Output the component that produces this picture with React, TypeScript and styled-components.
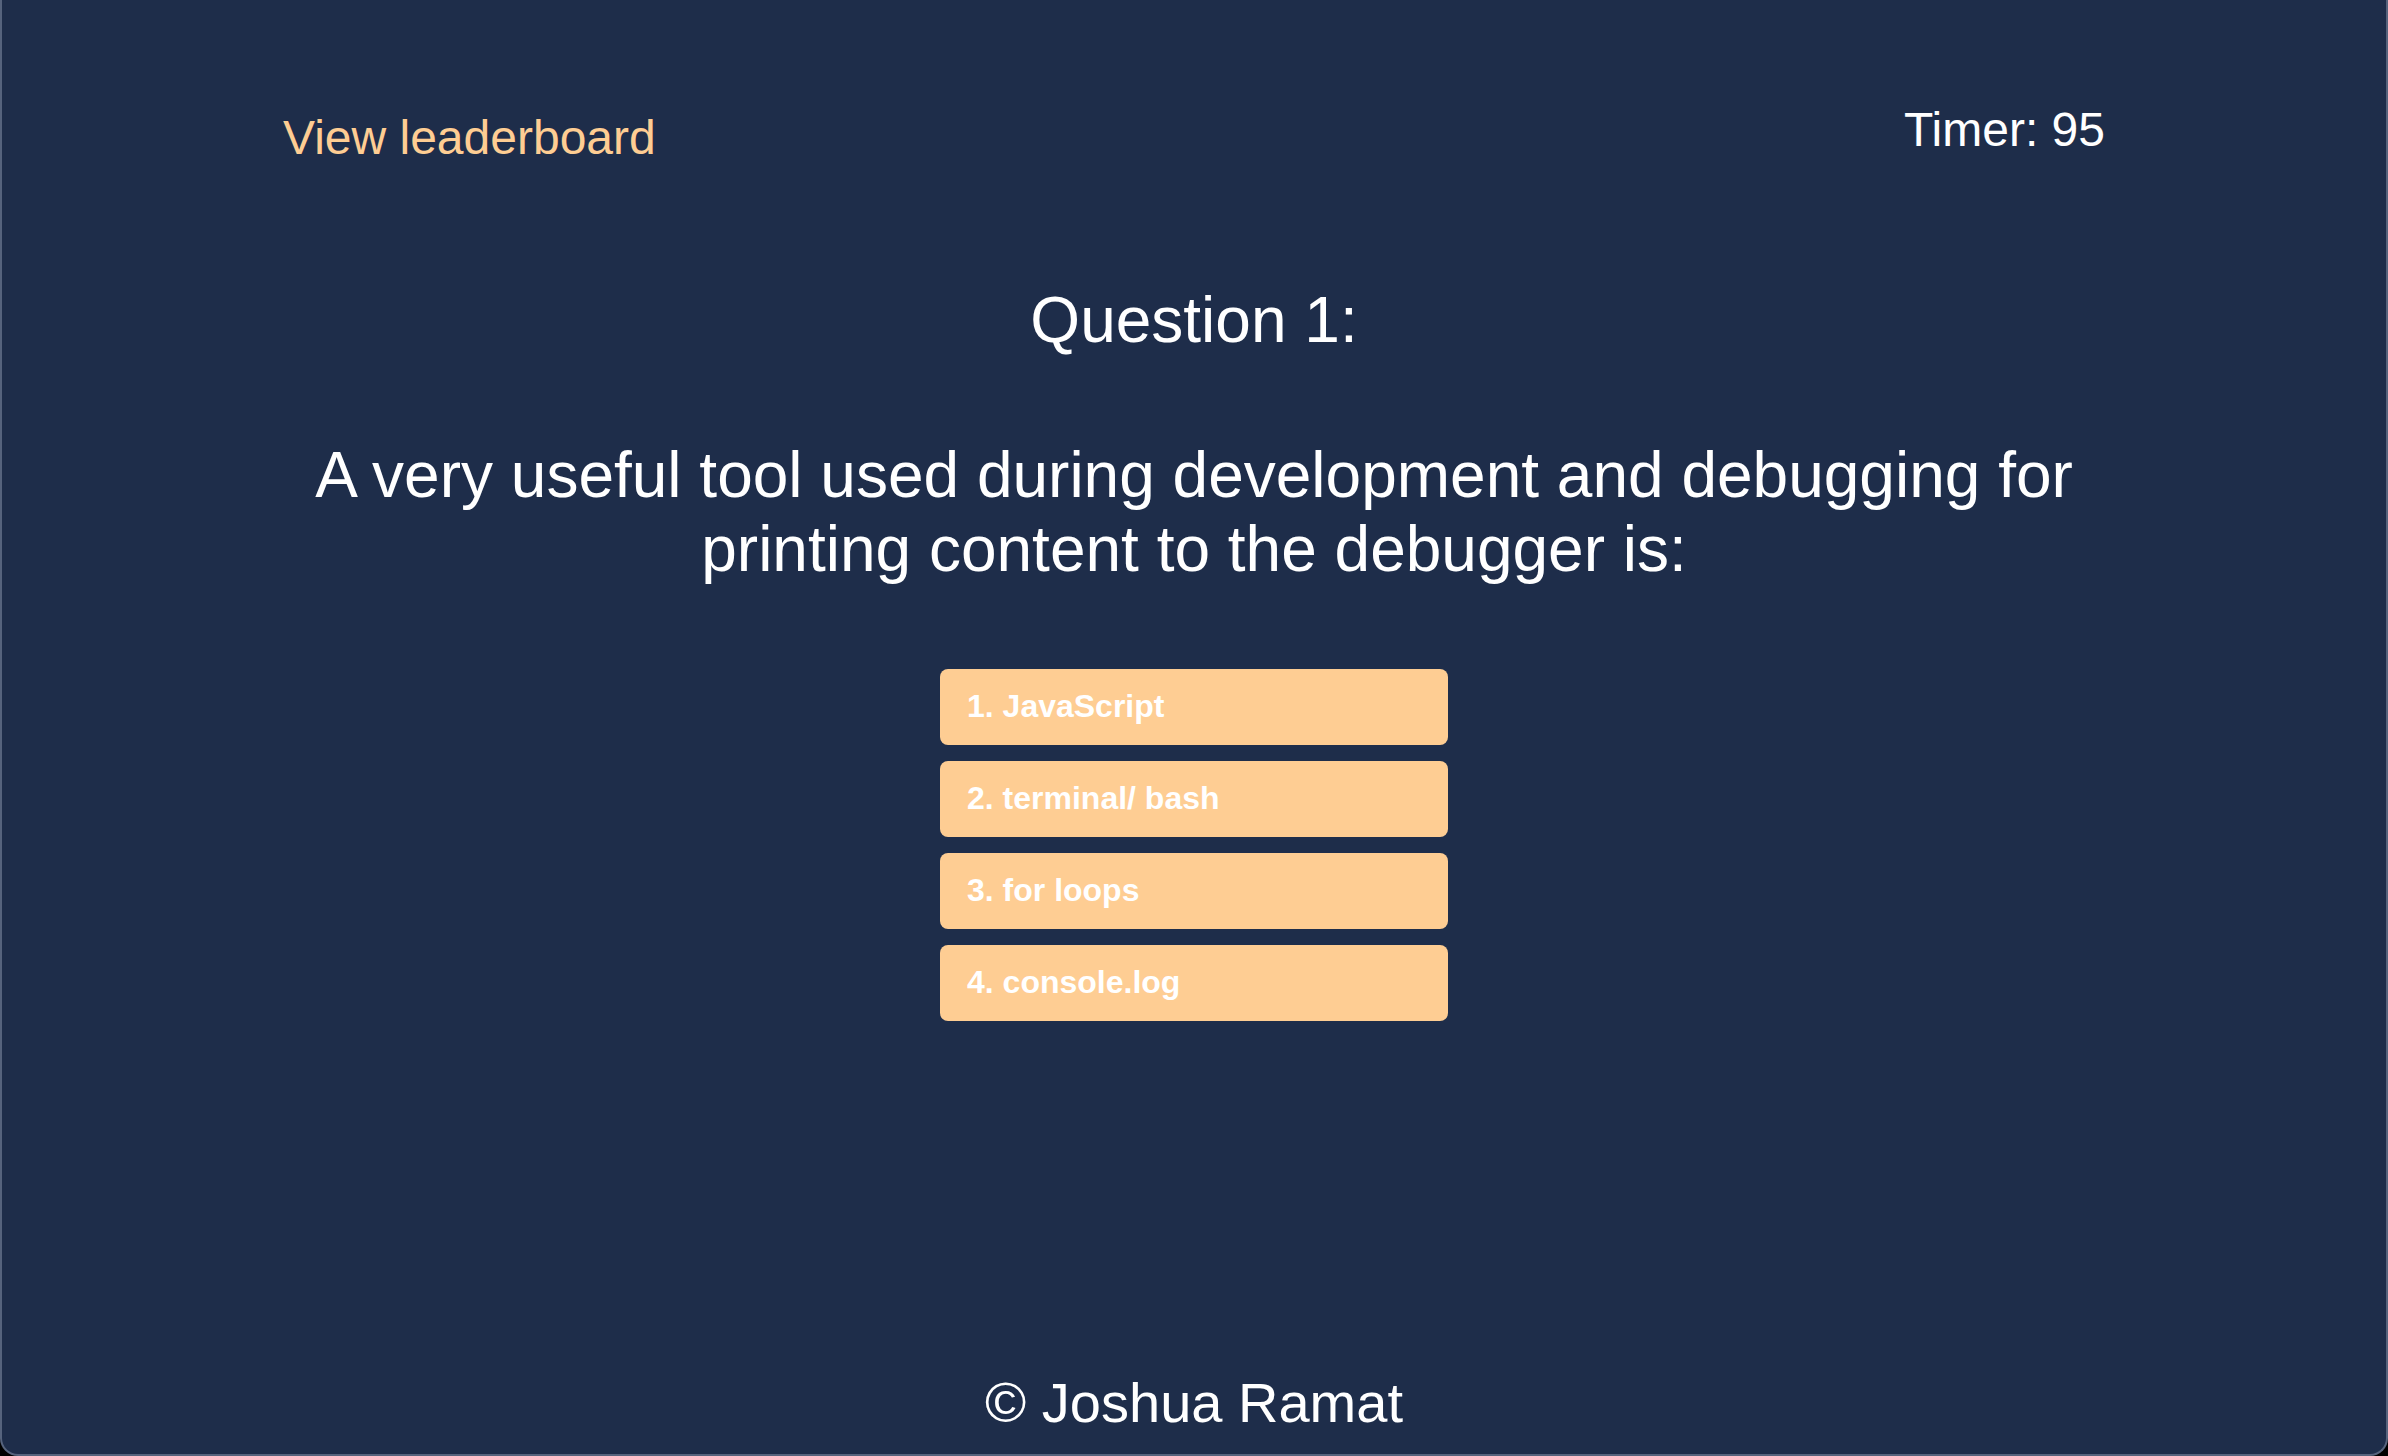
import React from "react";
import styled, { createGlobalStyle } from "styled-components";

const ACCENT = "#fecd93";
const BACKGROUND = "#1e2d4a";

const choices = ["JavaScript", "terminal/ bash", "for loops", "console.log"];

const GlobalStyle = createGlobalStyle`
  html, body {
    margin: 0;
    padding: 0;
    background: #000;
    font-family: "Liberation Sans", Arial, Helvetica, sans-serif;
  }

  * {
    box-sizing: border-box;
  }
`;

const App = () => {
  return (
    <>
      <GlobalStyle />
      <QuizWindow>
        <Header>
          <LeaderboardLink href="#">View leaderboard</LeaderboardLink>
          <Timer>Timer: 95</Timer>
        </Header>

        <QuestionCard>
          <QuestionTitle>Question 1:</QuestionTitle>
          <QuestionText>
            A very useful tool used during development and debugging for
            printing content to the debugger is:
          </QuestionText>

          <ChoiceList>
            {choices.map((choice, i) => (
              <ChoiceButton key={choice}>
                {i + 1}. {choice}
              </ChoiceButton>
            ))}
          </ChoiceList>
        </QuestionCard>

        <Footer>© Joshua Ramat</Footer>
      </QuizWindow>
    </>
  );
};

export default App;

const QuizWindow = styled.div`
  display: flex;
  flex-direction: column;
  height: 100vh;
  background: ${BACKGROUND};
  border: 2px solid #56637d;
  border-top: none;
  border-radius: 0 0 18px 18px;
  overflow: hidden;
  color: #fff;
`;

const Header = styled.header`
  display: flex;
  justify-content: space-between;
  align-items: flex-start;
  padding: 102px 281px 0;
`;

const LeaderboardLink = styled.a`
  margin-top: 8px;
  font-size: 48px;
  color: ${ACCENT};
  text-decoration: none;
`;

const Timer = styled.div`
  font-size: 48px;
`;

const QuestionCard = styled.main`
  display: flex;
  flex-direction: column;
  align-items: center;
  padding: 0 281px;
  text-align: center;
`;

const QuestionTitle = styled.h2`
  margin: 118px 0 0;
  font-size: 64px;
  font-weight: 400;
`;

const QuestionText = styled.p`
  margin: 81px 0 0;
  font-size: 64px;
`;

const ChoiceList = styled.div`
  display: flex;
  flex-direction: column;
  gap: 16px;
  width: 508px;
  margin-top: 83px;
`;

const ChoiceButton = styled.button`
  display: flex;
  align-items: center;
  height: 76px;
  padding: 0 27px 2px;
  border: none;
  border-radius: 8px;
  background: ${ACCENT};
  color: #fff;
  font-family: inherit;
  font-size: 32px;
  font-weight: 700;
  text-align: left;
  cursor: pointer;
`;

const Footer = styled.footer`
  margin-top: auto;
  padding-bottom: 19px;
  font-size: 56px;
  text-align: center;
`;
